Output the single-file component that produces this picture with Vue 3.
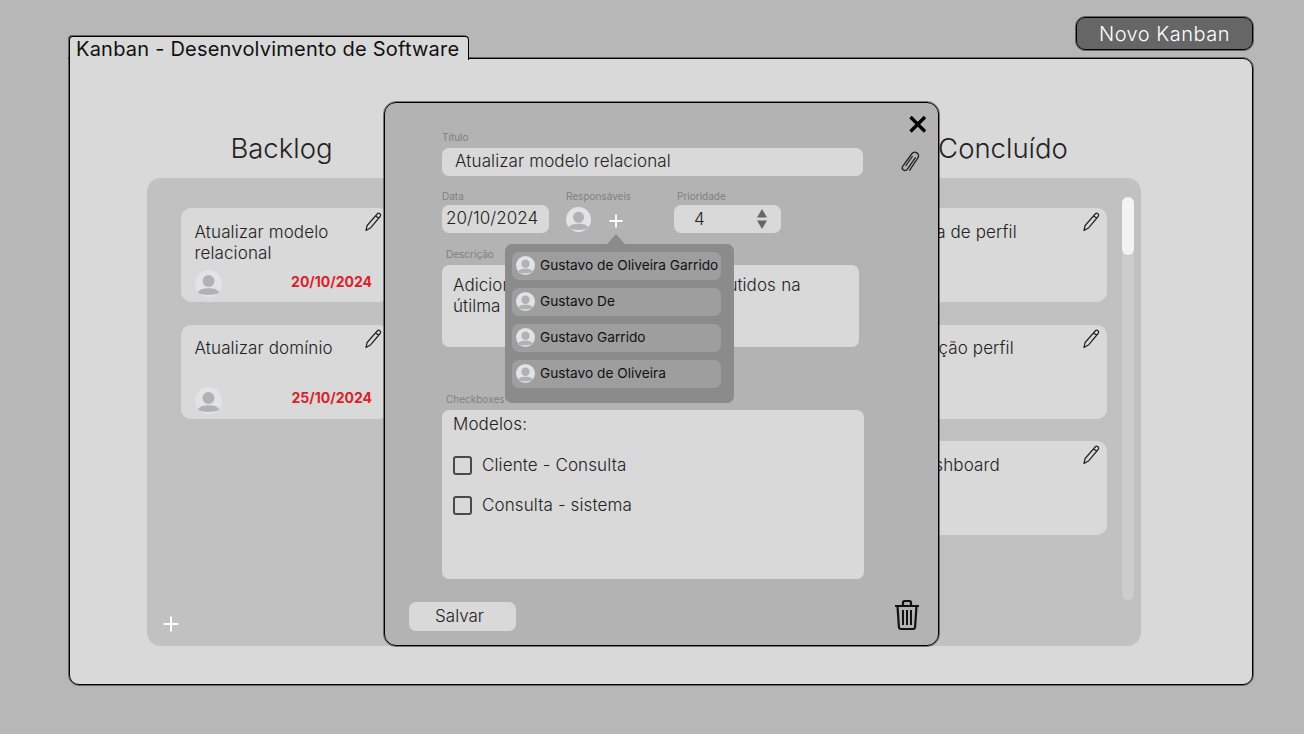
<script setup>
const columns = [
  {
    name: "Backlog",
    cards: [
      { title: "Atualizar modelo relacional", date: "20/10/2024" },
      { title: "Atualizar domínio", date: "25/10/2024" },
    ],
  },
  { name: "", cards: [] },
  {
    name: "Concluído",
    cards: [{ title: "Tela de perfil" }, { title: "Adição perfil" }, { title: "Dashboard" }],
  },
];

const people = ["Gustavo de Oliveira Garrido", "Gustavo De", "Gustavo Garrido", "Gustavo de Oliveira"];
const checks = ["Cliente - Consulta", "Consulta - sistema"];
</script>

<template>
  <div class="page">
    <svg class="defs" width="0" height="0">
      <symbol id="avatar" viewBox="0 0 28 28">
        <circle cx="14" cy="14" r="14" fill="currentColor" />
        <circle cx="14" cy="11.500" r="6.200" class="person" />
        <path d="M3 23.300C4.500 19.600 9 18.800 14 18.800s9.500 .8 11 4.500c-3 3.300-19 3.300-22 0z" class="person" />
      </symbol>
      <symbol id="pencil" viewBox="0 0 18 20">
        <path
          d="M13.200 2c.8-.9 1.900-.9 2.700-.2s.9 1.800.2 2.700L6.800 15.700 2 18.500l1.100-5L13.200 2zM11.600 3.800l3 2.700"
          fill="none"
          stroke="currentColor"
          stroke-width="1.200"
          stroke-linejoin="round"
        />
      </symbol>
    </svg>

    <div class="top">
      <button class="new-btn">Novo Kanban</button>
    </div>
    <div class="tab">Kanban - Desenvolvimento de Software</div>

    <div class="panel">
      <div class="heads">
        <h2 v-for="col in columns" :key="col.name">{{ col.name }}</h2>
      </div>
      <div class="board">
        <div class="cols">
          <div v-for="col in columns" :key="col.name" class="col">
            <div v-for="card in col.cards" :key="card.title" class="card">
              <svg class="pencil"><use href="#pencil" /></svg>
              <div class="card-title">{{ card.title }}</div>
              <div v-if="card.date" class="card-foot">
                <svg class="avatar"><use href="#avatar" /></svg>
                <span class="date">{{ card.date }}</span>
              </div>
            </div>
          </div>
        </div>
        <div class="scroll"><div class="thumb"></div></div>
        <svg class="add-card" width="18" height="18" viewBox="0 0 18 18">
          <path d="M9 1.500v15M1.500 9h15" stroke="#fff" stroke-width="2" />
        </svg>
      </div>
    </div>

    <div class="modal">
      <svg class="close" width="20" height="20" viewBox="0 0 20 20">
        <path d="M2.500 3l14.500 14.500M17 3L2.500 17.500" stroke="#000" stroke-width="3.400" />
      </svg>
      <svg class="clip" width="20" height="24" viewBox="0 0 20 24">
        <path
          d="M15.600 6.400 7.400 18.200c-.9 1.300-2.600 1.700-3.900.8s-1.600-2.600-.7-3.900L11.600 3c1.300-1.800 3.600-2.300 5.300-1.100s2 3.500.8 5.300L9.400 19.600"
          transform="translate(0 1)"
          fill="none"
          stroke="#222"
          stroke-width="1.300"
        />
        <path d="M12.600 6 5.600 16" fill="none" stroke="#222" stroke-width="1.300" />
      </svg>

      <label class="lbl">Título</label>
      <div class="input title-input">Atualizar modelo relacional</div>

      <div class="row">
        <div class="f-date">
          <label class="lbl">Data</label>
          <div class="input date-input">20/10/2024</div>
        </div>
        <div class="f-resp">
          <label class="lbl">Responsáveis</label>
          <div class="resp-line">
            <svg class="avatar sm"><use href="#avatar" /></svg>
            <svg width="14" height="14" viewBox="0 0 14 14">
              <path d="M7 .5v13M.5 7h13" stroke="#fff" stroke-width="1.800" />
            </svg>
          </div>
        </div>
        <div class="f-prio">
          <label class="lbl">Prioridade</label>
          <div class="input prio-input">
            <span>4</span>
            <svg width="10" height="20" viewBox="0 0 10 20">
              <path d="M5 0l5 8.500H0zM5 20 0 11.500h10z" fill="#666" />
            </svg>
          </div>
        </div>
      </div>

      <label class="lbl lbl-in lbl-desc">Descrição</label>
      <div class="input desc">Adicionar os demais atributos discutidos na útilma reunião</div>

      <label class="lbl lbl-in lbl-check">Checkboxes</label>
      <div class="input checks">
        <div class="checks-head">Modelos:</div>
        <div v-for="item in checks" :key="item" class="check">
          <span class="box"></span>
          {{ item }}
        </div>
      </div>

      <div class="foot">
        <button class="save">Salvar</button>
        <svg class="trash" width="26" height="32" viewBox="0 0 26 32">
          <path
            d="M1 7h24M9 7V3.500C9 2.600 9.600 2 10.500 2h5c.9 0 1.500.6 1.500 1.500V7M3.500 7l1.400 21c.1 1.200 1 2 2.100 2h12c1.100 0 2-.8 2.100-2L22.500 7"
            fill="none"
            stroke="#111"
            stroke-width="2.200"
          />
          <path d="M9 11v15M13 11v15M17 11v15" stroke="#111" stroke-width="2" />
        </svg>
      </div>

      <div class="popover">
        <div v-for="name in people" :key="name" class="person-row">
          <svg class="avatar xs"><use href="#avatar" /></svg>
          {{ name }}
        </div>
      </div>
    </div>
  </div>
</template>

<style>
body {
  background: #b7b7b7;
}
</style>

<style scoped>
* {
  box-sizing: border-box;
}
.page {
  position: relative;
  width: 1304px;
  height: 734px;
  overflow: hidden;
  padding: 17px 51px 0 69px;
  background: #b7b7b7;
  font-family: Inter, "Liberation Sans", sans-serif;
  color: #222;
}
.defs {
  position: absolute;
}
.person {
  fill: #b0b3b5;
}
.top {
  display: flex;
  justify-content: flex-end;
}
.new-btn {
  width: 177px;
  height: 33px;
  border: 1px solid #000;
  outline: 1px solid rgba(0, 0, 0, 0.45);
  border-radius: 9px;
  background: #666;
  color: #fff;
  font: 300 20px Inter, "Liberation Sans", sans-serif;
  letter-spacing: 0.5px;
}
.tab {
  position: relative;
  z-index: 1;
  width: 400px;
  height: 24px;
  margin-top: -14px;
  margin-bottom: -2px;
  padding-left: 6px;
  border: 1px solid #000;
  border-bottom: none;
  border-radius: 4px 4px 0 0;
  box-shadow: -1px -1px 0 rgba(0, 0, 0, 0.45);
  background: #d9d9d9;
  font-size: 20px;
  line-height: 24px;
  letter-spacing: 0.22px;
  color: #111;
  white-space: nowrap;
}
.panel {
  height: 627px;
  padding: 71px 111px 0 77px;
  border: 1px solid #000;
  outline: 1px solid rgba(0, 0, 0, 0.45);
  border-radius: 0 10px 10px 10px;
  background: #d9d9d9;
}
.heads {
  display: flex;
  justify-content: space-between;
  padding: 0 38px 0 34.500px;
}
.heads h2 {
  width: 200px;
  height: 36px;
  margin: 0 0 12px;
  font-size: 27.500px;
  font-weight: 300;
  line-height: 36px;
  text-align: center;
}
.board {
  position: relative;
  display: flex;
  gap: 15px;
  height: 468px;
  padding: 19px 7px 0 34px;
  border-radius: 14px;
  background: #c1c1c1;
}
.cols {
  flex: 1;
  display: flex;
  justify-content: space-between;
  padding-top: 11px;
}
.col {
  display: flex;
  flex-direction: column;
  gap: 22.500px;
  width: 208px;
}
.card {
  position: relative;
  display: flex;
  flex-direction: column;
  justify-content: space-between;
  height: 94px;
  padding: 13.500px 17px 5px 13.500px;
  border-radius: 10px;
  background: #d9d9d9;
}
.card-title {
  width: 160px;
  font-size: 17px;
  font-weight: 350;
  line-height: 21px;
  letter-spacing: 0.12px;
}
.pencil {
  position: absolute;
  top: 4px;
  right: 7px;
  width: 18px;
  height: 20px;
  color: #222;
}
.card-foot {
  display: flex;
  align-items: center;
  justify-content: space-between;
}
.avatar {
  flex: none;
  width: 27px;
  height: 27px;
  color: #e3e3e3;
}
.avatar.sm {
  width: 25px;
  height: 25px;
}
.avatar.xs {
  width: 19px;
  height: 19px;
}
.date {
  margin-bottom: 5px;
  font-size: 14px;
  font-weight: 700;
  color: #d9212a;
}
.scroll {
  width: 12px;
  height: 403px;
  border-radius: 6px;
  background: #cdcdcd;
}
.thumb {
  height: 58px;
  border-radius: 6px;
  background: #f3f3f3;
}
.add-card {
  position: absolute;
  left: 15px;
  bottom: 13px;
}

.modal {
  position: absolute;
  left: 384px;
  top: 102px;
  width: 555px;
  height: 544px;
  padding: 29px 0 0 57px;
  border: 1px solid #000;
  outline: 1px solid rgba(0, 0, 0, 0.45);
  border-radius: 12px;
  background: #b3b3b3;
}
.close {
  position: absolute;
  right: 10px;
  top: 11px;
}
.clip {
  position: absolute;
  right: 18px;
  top: 47px;
}
.lbl {
  display: block;
  height: 11px;
  margin-bottom: 5px;
  font-size: 10px;
  line-height: 11px;
  color: #808080;
}
.lbl-in {
  margin-left: 4px;
}
.input {
  border-radius: 7px;
  background: #d9d9d9;
  font-size: 17px;
  font-weight: 350;
}
.title-input {
  width: 421px;
  height: 28px;
  padding-left: 13px;
  line-height: 26px;
  letter-spacing: 0.12px;
}
.row {
  display: flex;
  height: 43px;
  margin-top: 15px;
}
.row .lbl {
  margin-bottom: 3px;
}
.f-date {
  width: 124px;
}
.date-input {
  width: 107px;
  height: 28px;
  padding-left: 4px;
  line-height: 26px;
  letter-spacing: 0.05px;
  white-space: nowrap;
}
.f-resp {
  width: 108px;
}
.resp-line {
  display: flex;
  align-items: center;
  gap: 18px;
  height: 28px;
}
.resp-line svg:last-child {
  margin-top: 4px;
}
.f-prio .lbl {
  padding-left: 3px;
}
.prio-input {
  display: flex;
  align-items: center;
  justify-content: space-between;
  width: 107px;
  height: 28px;
  padding: 0 14px 0 20px;
}
.lbl-desc {
  margin-top: 15px;
}
.desc {
  width: 417px;
  height: 82px;
  padding: 10px 11px;
  line-height: 21px;
  letter-spacing: 0.05px;
  word-spacing: 0.5px;
}
.lbl-check {
  margin-top: 46.500px;
  margin-bottom: 5.500px;
}
.checks {
  width: 422px;
  height: 169px;
  padding: 4px 11px;
  line-height: 20px;
  letter-spacing: 0.12px;
}
.checks-head {
  margin-bottom: 21px;
}
.check {
  display: flex;
  align-items: center;
  gap: 10px;
  height: 20px;
  margin-bottom: 20px;
}
.box {
  width: 19px;
  height: 19px;
  border: 2px solid #4a4a4a;
  border-radius: 3px;
}
.foot {
  position: absolute;
  left: 24px;
  right: 18px;
  top: 499px;
  display: flex;
  align-items: flex-start;
  justify-content: space-between;
}
.save {
  width: 107px;
  height: 29px;
  padding: 0 6px 2px 0;
  border: none;
  border-radius: 7px;
  background: #d9d9d9;
  color: #222;
  font: 350 17px Inter, "Liberation Sans", sans-serif;
}
.trash {
  margin-top: -3px;
}

.popover {
  position: absolute;
  left: 120px;
  top: 141px;
  width: 229px;
  height: 159px;
  padding: 8px 13px 0 7px;
  border-radius: 7px;
  background: #8b8b8b;
  display: flex;
  flex-direction: column;
  gap: 8.500px;
}
.popover::before {
  content: "";
  position: absolute;
  left: 102px;
  top: -10px;
  border-left: 9px solid transparent;
  border-right: 9px solid transparent;
  border-bottom: 10px solid #8b8b8b;
}
.person-row {
  display: flex;
  align-items: center;
  gap: 5px;
  height: 27.500px;
  padding: 0 0 1px 4px;
  border-radius: 7px;
  background: #9e9e9e;
  font-size: 13.700px;
  color: #111;
  white-space: nowrap;
}
</style>
